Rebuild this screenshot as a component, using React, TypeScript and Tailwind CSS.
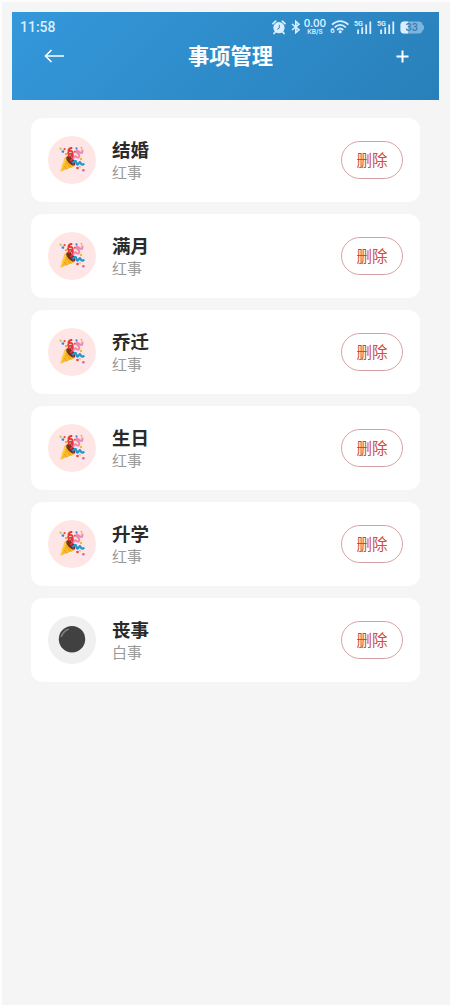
import React from 'react';

const items = [
  { name: '结婚', type: '红事' },
  { name: '满月', type: '红事' },
  { name: '乔迁', type: '红事' },
  { name: '生日', type: '红事' },
  { name: '升学', type: '红事' },
  { name: '丧事', type: '白事' },
];

const PartyIcon: React.FC = () => (
  <svg width="28" height="28" viewBox="0 0 28 28" fill="none">
    <path d="M2.2 25.8 L6.8 11.2 Q14 12.5 17.2 20 Z" fill="#f9b825" />
    <path d="M4.6 18.5 L9 23 M6.2 14.5 L13 21.5" stroke="#e29a1c" strokeWidth="0.9" />
    <path d="M3 25 L7.4 13" stroke="#ffd04d" strokeWidth="1.3" />
    <ellipse cx="12.8" cy="14.8" rx="3" ry="5.9" transform="rotate(-43 12.8 14.8)" fill="#7a3026" />
    <path
      d="M12.5 15 Q15.6 12 14.8 8.7 Q12.3 6.5 10.6 8.5 Q10.2 10.7 12.6 10.2 Q15.3 9 14.5 6 Q12.4 3.9 10.3 5.6 Q9.5 7 10.8 8 M10.3 5.4 Q10.6 1.8 14.3 2"
      stroke="#dc3b35"
      strokeWidth="1.8"
    />
    <path
      d="M15 13 L16.6 10.8 Q17.6 9.8 18.6 10.8 Q20.2 12.8 21 10.8 Q21.8 8 19.5 7.2 Q17.2 5.2 19 4.4 L22 6.4 Q24.3 8 24.5 5.5 L24 3.5"
      stroke="#f286b2"
      strokeWidth="2"
    />
    <path
      d="M14.6 17.3 Q17.2 13.2 18.3 16 Q18.5 19.6 20.3 18.1 Q22 15 22.6 17 Q23.5 19.8 26.3 17.6"
      stroke="#2196d3"
      strokeWidth="2.2"
    />
    <circle cx="2.6" cy="2.7" r="1.2" fill="#f5b52c" />
    <circle cx="4.9" cy="5.6" r="1.3" fill="#2e8ed0" />
    <circle cx="6.6" cy="3.2" r="1.1" fill="#e15046" />
    <circle cx="8" cy="8.2" r="1.1" fill="#f29b30" />
    <circle cx="16.8" cy="5.8" r="1" fill="#e15046" />
    <circle cx="18.5" cy="2.4" r="1.1" fill="#2e8ed0" />
    <circle cx="23.4" cy="1.8" r="1" fill="#f5b52c" />
    <circle cx="23" cy="13" r="1.2" fill="#f5b52c" />
    <circle cx="19.5" cy="22" r="1.3" fill="#dc4a3e" />
    <circle cx="22" cy="20.8" r="0.9" fill="#f5b52c" />
    <circle cx="25.4" cy="24.2" r="1.2" fill="#bf67ab" />
  </svg>
);

const BlackCircleIcon: React.FC = () => (
  <svg width="28" height="28" viewBox="0 0 28 28" fill="none">
    <circle cx="14" cy="13.2" r="13.2" fill="#414141" />
    <path d="M3.4 10.4 Q5.6 5 10.2 3.4" stroke="#858585" strokeWidth="1.5" strokeLinecap="round" />
  </svg>
);

const AlarmIcon: React.FC = () => (
  <svg width="14" height="15" viewBox="0 0 14 15" fill="none">
    <circle cx="7" cy="7.7" r="5.6" fill="#d9efff" />
    <path d="M1 3.6 L3.7 1.2 M13 3.6 L10.3 1.2 M3.2 12 L2 13.6 M10.8 12 L12 13.6" stroke="#d9efff" strokeWidth="1.7" strokeLinecap="round" />
    <path d="M7.3 4.8 V8.1 L5.2 9.3" stroke="#2e89c8" strokeWidth="1" />
  </svg>
);

const BluetoothIcon: React.FC = () => (
  <svg width="10" height="14" viewBox="0 0 10 14" fill="none" stroke="#d9efff" strokeWidth="1.6">
    <path d="M1 4 L8 9.8 L4.8 12.6 V1.4 L8 4.2 L1 10" />
  </svg>
);

const WifiIcon: React.FC = () => (
  <svg width="20" height="16" viewBox="0 0 20 16" fill="none" stroke="#d9efff" strokeWidth="1.8">
    <path d="M2 5.6 Q10.2 -1.4 18.4 5.6 M4.6 8.4 Q10.2 3.4 15.8 8.4 M7.2 11 Q10.2 8 13.2 11" />
    <circle cx="10.2" cy="12.8" r="1.5" fill="#d9efff" stroke="none" />
    <text x="0.2" y="14.4" fontSize="7.5" fontWeight="700" fontFamily="Roboto, sans-serif" fill="#d9efff" stroke="none">6</text>
  </svg>
);

const SignalIcon: React.FC = () => (
  <svg width="18" height="15" viewBox="0 0 18 15" fill="none">
    <text x="0" y="6.2" fontSize="7.2" fontWeight="700" fontFamily="Roboto, sans-serif" fill="#d9efff">5G</text>
    <path d="M4.1 9.5 V14 M8.2 7.3 V14 M12.2 4.6 V14 M16.3 1.5 V14" stroke="#d9efff" strokeWidth="1.8" />
  </svg>
);

const BatteryIcon: React.FC = () => (
  <svg width="25" height="13" viewBox="0 0 25 13">
    <path d="M4 0.5 H19 Q22 0.5 22.5 3.5 L24 5 V8 L22.5 9.5 Q22 12.5 19 12.5 H4 Q0.5 12.5 0.5 9 V4 Q0.5 0.5 4 0.5 Z" fill="#7eb5dc" />
    <path d="M4 0.5 H8 V12.5 H4 Q0.5 12.5 0.5 9 V4 Q0.5 0.5 4 0.5 Z" fill="#d9efff" />
    <text x="5.4" y="10.4" fontSize="11" fontWeight="500" fontFamily="Roboto, sans-serif" fill="#3a7fb3">33</text>
  </svg>
);

const StatusBar: React.FC = () => (
  <div className="flex h-[30px] items-center justify-between pl-2 pr-[14px] text-[#d9efff]">
    <span className="font-['Roboto',sans-serif] text-[14px] font-medium leading-none">11:58</span>
    <div className="flex items-center">
      <AlarmIcon />
      <div className="ml-[5px]">
        <BluetoothIcon />
      </div>
      <svg className="ml-[2px]" width="24" height="18" viewBox="0 0 24 18" fill="#d9efff" fontFamily="Inter, sans-serif" fontWeight="600">
        <text x="12" y="9.2" fontSize="10" textAnchor="middle">0.00</text>
        <text x="12" y="15.6" fontSize="6.5" textAnchor="middle">KB/S</text>
      </svg>
      <div className="ml-[3px]">
        <WifiIcon />
      </div>
      <div className="ml-[4px]">
        <SignalIcon />
      </div>
      <div className="ml-[5px]">
        <SignalIcon />
      </div>
      <div className="ml-[5px]">
        <BatteryIcon />
      </div>
    </div>
  </div>
);

export default function App() {
  return (
    <div className="h-[1005px] w-[450px] overflow-hidden border-l-2 border-t-2 border-[#fdfdfd] bg-[#f5f5f5] pl-[10px] pr-[11px] pt-[10px] font-['Noto_Sans_CJK_SC',sans-serif]">
      <header className="h-[88px] bg-linear-135 from-[#3498db] to-[#2980b9]">
        <StatusBar />
        <div className="flex h-[28px] items-center justify-between pl-[32px] pr-[30px]">
          <button>
            <svg width="21" height="14" viewBox="0 0 21 14" fill="none" stroke="#fff" strokeWidth="1.6">
              <path d="M20 7 H1.5 M7.5 1 L1.5 7 L7.5 13" />
            </svg>
          </button>
          <h1 className="pb-[2px] text-[21.2px] font-bold leading-[26px] text-white">事项管理</h1>
          <button>
            <svg width="13" height="13" viewBox="0 0 13 13" fill="none" stroke="#fff" strokeWidth="2">
              <path d="M6.5 0.5 V12.5 M0.5 6.5 H12.5" />
            </svg>
          </button>
        </div>
      </header>

      <main className="flex flex-col gap-3 pl-[19px] pr-[19px] pt-[18px]">
        {items.map((item) => (
          <div key={item.name} className="flex h-[84px] items-center rounded-xl bg-white pl-[17px] pr-[17px]">
            <div
              className={
                item.type === '红事'
                  ? 'flex size-12 items-center justify-center rounded-full bg-[#ffe6e6]'
                  : 'flex size-12 items-center justify-center rounded-full bg-[#f0f0f0]'
              }
            >
              {item.type === '红事' ? <PartyIcon /> : <BlackCircleIcon />}
            </div>
            <div className="ml-4 flex-1 pb-[2px]">
              <p className="text-[18.5px] font-bold leading-[24px] text-[#2a2a2a]">{item.name}</p>
              <p className="text-[15px] leading-[21px] text-[#999]">{item.type}</p>
            </div>
            <button className="h-[38px] w-[62px] rounded-full border border-[#d8a3a3] text-[15.5px] leading-none text-[#cf4a3c]">
              删除
            </button>
          </div>
        ))}
      </main>
    </div>
  );
}
